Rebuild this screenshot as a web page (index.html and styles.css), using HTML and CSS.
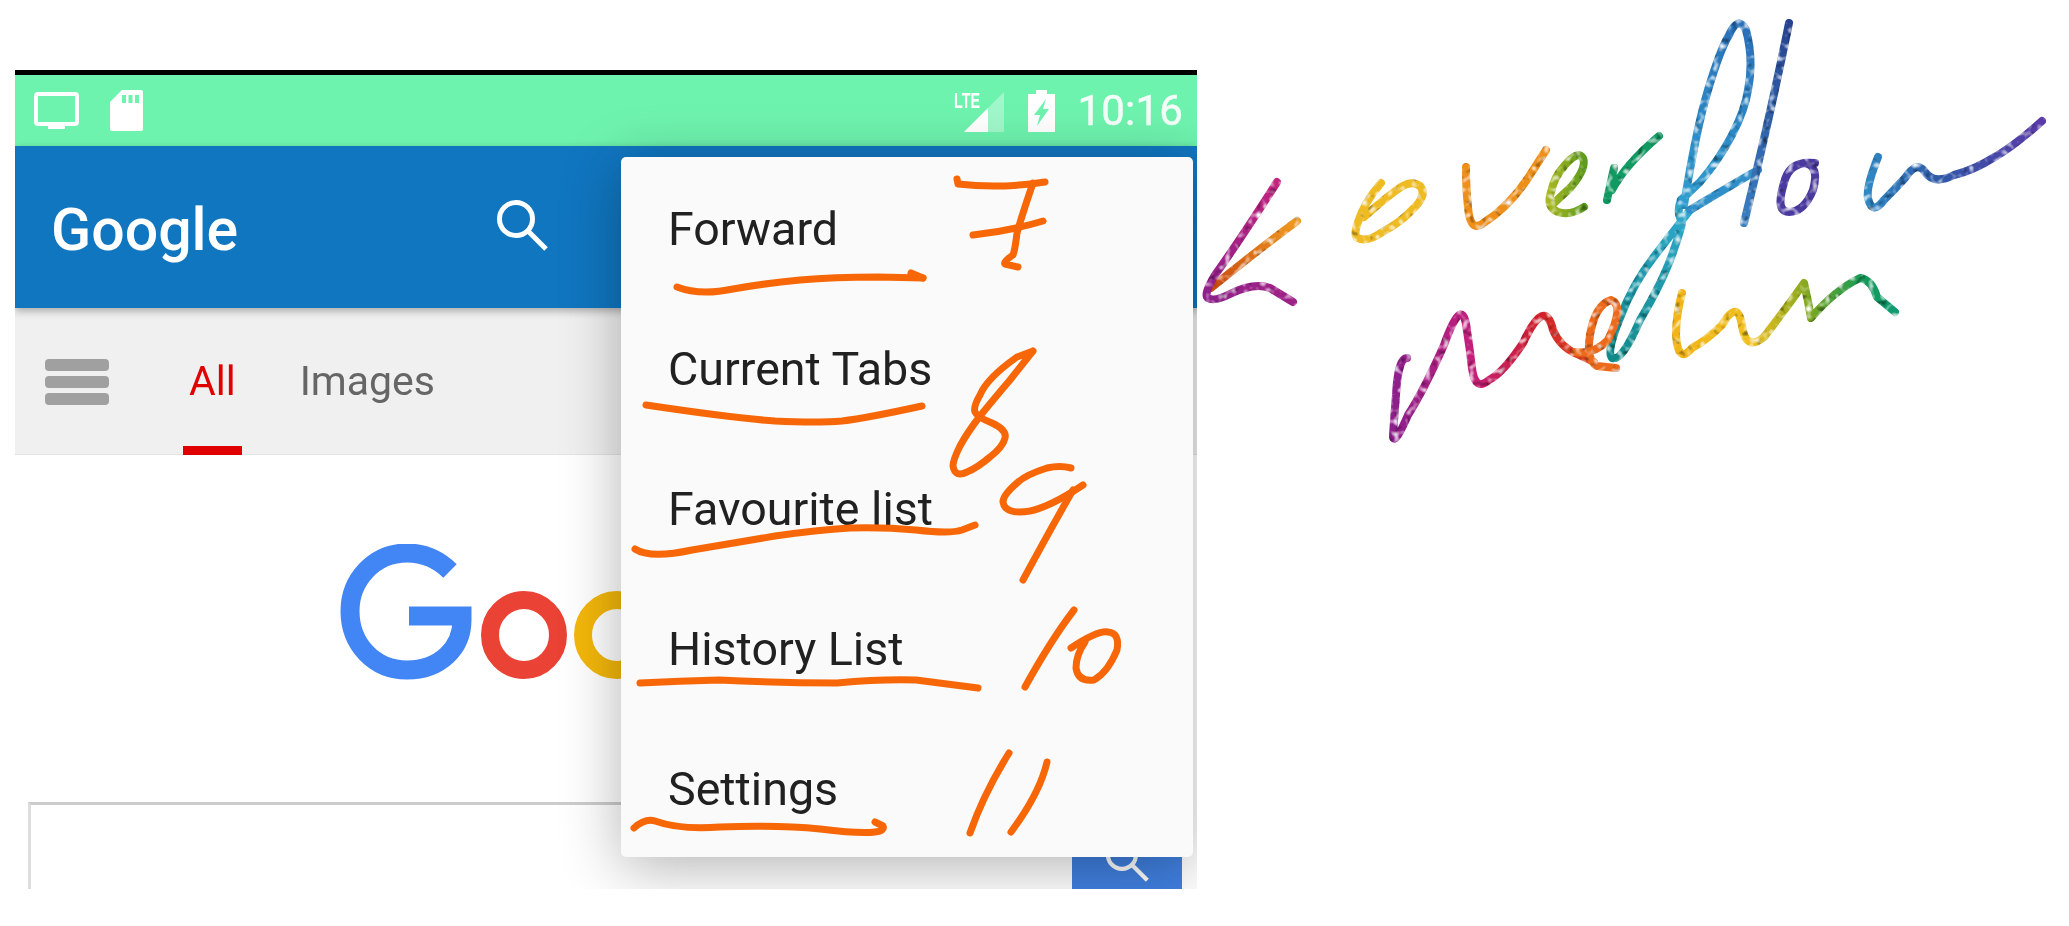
FILE: index.html
```html
<!DOCTYPE html>
<html lang="en">
<head>
<meta charset="utf-8">
<title>Overflow menu</title>
<link rel="stylesheet" href="styles.css">
</head>
<body>
<div class="stage">
  <div class="phone">
    <div class="status">
      <svg class="ic-monitor" width="45" height="37" viewBox="0 0 45 37"><rect x="2" y="2" width="41" height="30" rx="2" fill="none" stroke="#fff" stroke-width="4"/><rect x="14" y="33" width="17" height="4" fill="#fff"/></svg>
      <svg class="ic-sd" width="33" height="41" viewBox="0 0 33 41"><path d="M12 0H31a2 2 0 0 1 2 2V39a2 2 0 0 1-2 2H2a2 2 0 0 1-2-2V12Z" fill="#fff"/><path d="M12 5h4v8h-4zM18.500 5h4v8h-4zM25 5h4v8h-4z" fill="#6ef3ae"/></svg>
      <svg class="ic-signal" width="50" height="42" viewBox="0 0 50 42"><text class="lte" x="0" y="18" textLength="26" lengthAdjust="spacingAndGlyphs">LTE</text><path d="M10 42 50 2V42Z" fill="#fff" fill-opacity=".35"/><path d="M10 42 34 18V42Z" fill="#fff"/></svg>
      <svg class="ic-battery" width="27" height="42" viewBox="0 0 27 42"><path d="M8 0H19V4H27V42H0V4H8Z" fill="#fff"/><path d="M18 9 6 25H12L9 36 21 19H15Z" fill="#6ef3ae"/></svg>
      <span class="time">10:16</span>
    </div>
    <div class="appbar">
      <span class="brand">Google</span>
      <svg class="ic-search" width="52" height="52" viewBox="0 0 52 52"><circle cx="20" cy="20" r="16.500" fill="none" stroke="#fff" stroke-width="5"/><path d="M32 32 50 50" stroke="#fff" stroke-width="5" fill="none"/></svg>
    </div>
    <div class="tabs">
      <div class="burger"><i></i><i></i><i></i></div>
      <span class="tab tab-active">All</span>
      <span class="tab">Images</span>
    </div>
    <div class="home">
      <svg class="logo" width="400" height="140" viewBox="0 0 400 140">
        <path d="M110 27C99 16 84 9 67 9 34 9 10 36 10 67 10 100 34 126 67 126 100 126 122 104 122 76V72H69" fill="none" stroke="#4285f4" stroke-width="19"/>
        <ellipse cx="184" cy="91" rx="34" ry="35" fill="none" stroke="#ea4335" stroke-width="18"/>
        <ellipse cx="277" cy="91" rx="34" ry="35" fill="none" stroke="#f4b80a" stroke-width="18"/>
      </svg>
      <div class="searchbox">
        <div class="field"></div>
        <div class="go"><svg width="44" height="44" viewBox="0 0 52 52"><circle cx="20" cy="20" r="16.500" fill="none" stroke="#fff" stroke-width="5"/><path d="M32 32 50 50" stroke="#fff" stroke-width="5" fill="none"/></svg></div>
      </div>
    </div>
    <ul class="menu">
      <li>Forward</li>
      <li>Current Tabs</li>
      <li>Favourite list</li>
      <li>History List</li>
      <li>Settings</li>
    </ul>
  </div>

  <svg class="ink" width="2069" height="926" viewBox="0 0 2069 926">
    <defs>
      <linearGradient id="g-arrow" gradientUnits="userSpaceOnUse" x1="1280" y1="180" x2="1205" y2="300"><stop offset="0" stop-color="#c4247e"/><stop offset="1" stop-color="#8c1f8c"/></linearGradient>
      <linearGradient id="g-head" gradientUnits="userSpaceOnUse" x1="1297" y1="221" x2="1211" y2="288"><stop offset="0" stop-color="#f09a20"/><stop offset="1" stop-color="#c8480f"/></linearGradient>
      <linearGradient id="g-f" gradientUnits="userSpaceOnUse" x1="1740" y1="20" x2="1680" y2="210"><stop offset="0" stop-color="#2a6fb8"/><stop offset="1" stop-color="#2f9fd0"/></linearGradient>
      <linearGradient id="g-teal" gradientUnits="userSpaceOnUse" x1="1680" y1="210" x2="1615" y2="360"><stop offset="0" stop-color="#2fa8cc"/><stop offset="1" stop-color="#0f8a88"/></linearGradient>
      <linearGradient id="g-l" gradientUnits="userSpaceOnUse" x1="1789" y1="23" x2="1744" y2="223"><stop offset="0" stop-color="#27438f"/><stop offset="1" stop-color="#3a7fc0"/></linearGradient>
      <linearGradient id="g-w" gradientUnits="userSpaceOnUse" x1="1866" y1="0" x2="2042" y2="0"><stop offset="0" stop-color="#2f88c4"/><stop offset=".4" stop-color="#2f5aa8"/><stop offset="1" stop-color="#5a3aa8"/></linearGradient>
      <linearGradient id="g-m" gradientUnits="userSpaceOnUse" x1="1393" y1="0" x2="1620" y2="0"><stop offset="0" stop-color="#8c1f8c"/><stop offset=".35" stop-color="#c41f7a"/><stop offset=".65" stop-color="#d0202a"/><stop offset="1" stop-color="#ec6a1c"/></linearGradient>
      <linearGradient id="g-n" gradientUnits="userSpaceOnUse" x1="1676" y1="0" x2="1895" y2="0"><stop offset="0" stop-color="#f2b416"/><stop offset=".35" stop-color="#f0c020"/><stop offset=".6" stop-color="#82a820"/><stop offset=".85" stop-color="#149a58"/><stop offset="1" stop-color="#0f9a70"/></linearGradient>
      <linearGradient id="g-e2" gradientUnits="userSpaceOnUse" x1="1548" y1="0" x2="1587" y2="0"><stop offset="0" stop-color="#a8b820"/><stop offset="1" stop-color="#5a9a20"/></linearGradient>
      <filter id="glitter" filterUnits="userSpaceOnUse" x="1190" y="10" width="870" height="440" color-interpolation-filters="sRGB">
        <feTurbulence type="fractalNoise" baseFrequency="0.16" numOctaves="1" seed="4" result="noise"/>
        <feColorMatrix in="noise" type="matrix" values="0 0 0 0 1 0 0 0 0 1 0 0 0 0 1 3 0 0 0 -1.500" result="light"/>
        <feComposite in="light" in2="SourceAlpha" operator="in" result="sparkle"/>
        <feColorMatrix in="noise" type="matrix" values="0 0 0 0 0 0 0 0 0 0 0 0 0 0 0 0 -2 0 0 .850" result="dark"/>
        <feComposite in="dark" in2="SourceAlpha" operator="in" result="shade"/>
        <feMerge><feMergeNode in="SourceGraphic"/><feMergeNode in="shade"/><feMergeNode in="sparkle"/></feMerge>
      </filter>
    </defs>

    <g class="orange">
      <path d="M677 287Q700 296 733 289Q767 283 800 280Q833 277 878 277L923 278"/>
      <path d="M911 273L923 278"/>
      <path d="M957 179L958 184Q1000 189 1045 182"/>
      <path d="M1033 183Q1022 215 1017 233Q1015 250 1013 255Q1003 262 1005 264L1018 267"/>
      <path d="M973 235Q1010 231 1043 221"/>
      <path d="M646 405Q733 418 775 421Q817 423 842 421Q867 418 922 406"/>
      <path d="M1033 351L1017 357Q987 378 980 395Q973 407 975 412Q977 417 992 423Q1007 430 1005 438Q1003 447 990 457Q977 468 967 472Q955 478 953 466Q953 460 960 446Q967 433 980 416Q993 400 1010 380L1033 351"/>
      <path d="M635 549Q650 559 692 550Q733 543 775 536Q817 530 850 528Q883 527 916 530Q950 534 962 530L975 525"/>
      <path d="M1071 468Q1060 465 1047 468Q1025 475 1017 483Q1003 495 1003 502Q1005 515 1030 511Q1050 507 1083 485"/>
      <path d="M1073 490Q1050 530 1023 580"/>
      <path d="M640 683Q680 681 719 680Q780 683 837 683Q880 679 916 680L978 688"/>
      <path d="M1074 610Q1051 640 1025 687"/>
      <path d="M1071 648Q1098 630 1108 632Q1120 633 1117 650Q1108 672 1094 680Q1078 682 1076 668Q1076 655 1085 642"/>
      <path d="M634 828Q645 818 655 821Q680 830 720 827Q778 825 820 829Q860 834 875 832Q885 831 883 826L875 822"/>
      <path d="M1009 753Q984 793 970 833"/>
      <path d="M1047 762Q1040 793 1011 832"/>
    </g>

    <g class="glitter">
      <path stroke="url(#g-head)" d="M1297 221Q1254 253 1211 288"/>
      <path stroke="url(#g-arrow)" d="M1277 182Q1240 240 1215 275Q1203 295 1208 298Q1214 302 1230 294Q1254 282 1270 288L1293 302"/>
      <path stroke="#eebb22" d="M1381 183Q1364 203 1358 222Q1353 236 1358 238Q1367 243 1384 231Q1401 222 1412 210Q1428 195 1420 186Q1412 180 1401 187Q1385 198 1364 217"/>
      <path stroke="#ee8f1a" d="M1466 167Q1466 190 1468 207Q1470 232 1482 224Q1509 207 1528 178L1546 150"/>
      <path stroke="url(#g-e2)" d="M1584 207Q1570 216 1558 212Q1546 207 1551 192Q1554 177 1565 165Q1578 150 1583 158Q1587 168 1571 187L1554 203"/>
      <path stroke="#109a62" d="M1607 200L1614 168M1612 190Q1625 165 1659 136"/>
      <path stroke="url(#g-teal)" d="M1681 200Q1676 212 1682 222Q1682 227 1672 255Q1662 283 1640 320Q1622 362 1612 358Q1606 352 1620 318Q1633 283 1656 254L1690 210"/>
      <path stroke="url(#g-f)" d="M1684 205Q1696 130 1708 90Q1720 50 1729 35Q1738 15 1746 30Q1754 60 1748 90Q1745 110 1732 135Q1719 160 1700 182L1681 200"/>
      <path stroke="#2f8fc8" d="M1690 210Q1740 180 1758 170"/>
      <path stroke="url(#g-l)" d="M1789 23Q1770 117 1744 223"/>
      <path stroke="#4a3aa0" d="M1815 163Q1789 160 1784 183Q1775 212 1789 212Q1804 212 1813 190Q1820 165 1804 163"/>
      <path stroke="url(#g-w)" d="M1878 157Q1866 187 1868 198Q1872 216 1884 200Q1894 190 1905 178Q1917 160 1925 172Q1934 185 1954 175Q1974 170 1993 158Q2013 147 2042 121"/>
      <path stroke="url(#g-m)" d="M1407 358Q1398 358 1396 395Q1393 433 1393 437Q1395 445 1408 415Q1424 390 1444 345Q1463 292 1467 331Q1470 350 1472 368Q1475 392 1489 380Q1503 373 1523 343Q1545 296 1553 330Q1560 347 1577 354L1594 362"/>
      <path stroke="#ec6a1c" d="M1575 352Q1594 355 1608 340Q1625 305 1611 300Q1595 305 1590 335Q1586 360 1597 366L1616 368"/>
      <path stroke="url(#g-n)" d="M1682 293Q1676 315 1676 335Q1678 365 1692 348Q1707 340 1722 325Q1738 298 1742 326Q1746 352 1764 337Q1785 310 1804 283Q1808 300 1811 318Q1835 290 1860 278Q1872 280 1877 297L1895 312"/>
    </g>
  </svg>
</div>
</body>
</html>
```
FILE: styles.css
```css
* { box-sizing: border-box; }
html, body { margin: 0; height: 926px; overflow: hidden; background: #fff; }
body { font-family: Roboto, "Noto Sans", sans-serif; }

.stage { position: relative; width: 2069px; height: 926px; padding: 70px 0 0 15px; }

.phone {
  position: relative;
  width: 1182px;
  height: 819px;
  overflow: hidden;
  border-top: 5px solid #000;
  background: #fff;
  display: flex;
  flex-direction: column;
  filter: blur(.6px);
}

.status {
  flex: 0 0 71px;
  background: #6ef3ae;
  display: flex;
  align-items: center;
  padding: 0 14px 0 19px;
}
.ic-sd { margin-left: 31px; }
.ic-signal { margin-left: auto; overflow: visible; }
.lte { font-family: "Liberation Sans", sans-serif; font-size: 22px; font-weight: 700; fill: #fff; }
.ic-battery { margin-left: 24px; }
.time { margin-left: 22px; font-size: 42px; line-height: 1; color: #fff; opacity: .92; letter-spacing: .2px; -webkit-text-stroke: .5px #fff; }

.appbar {
  flex: 0 0 162px;
  background: #1076c0;
  display: flex;
  align-items: center;
  padding: 4px 0 0 36px;
  position: relative;
  z-index: 1;
  box-shadow: 0 3px 8px rgba(0, 0, 0, .3);
}
.brand { font-size: 59px; font-weight: 500; color: #fff; line-height: 1; }
.ic-search { margin-left: 258px; margin-top: -8px; }

.tabs {
  flex: 0 0 147px;
  background: #f0f0f0;
  border-bottom: 1px solid #e4e4e4;
  display: flex;
  align-items: center;
  padding-left: 30px;
}
.burger { display: flex; flex-direction: column; gap: 5px; width: 64px; margin-top: 2px; }
.burger i { display: block; height: 12px; border-radius: 4px; background: #a0a0a0; }
.tab {
  position: relative;
  font-size: 41px;
  line-height: 146px;
  padding: 0 6px;
  color: #666;
}
.tab-active { color: #e00000; margin-left: 74px; margin-right: 52px; }
.tab-active::after {
  content: "";
  position: absolute;
  left: 0;
  right: 0;
  bottom: -1px;
  height: 9px;
  background: #e00000;
}

.home { flex: 1; display: flex; flex-direction: column; padding: 89px 15px 0 13px; }
.logo { display: block; margin-left: 312px; flex: none; }
.searchbox { margin-top: 118px; flex: 1; display: flex; }
.field { flex: 1; border-top: 3px solid #cccccc; border-left: 3px solid #dddddd; }
.go { flex: 0 0 110px; background: #4080e0; display: flex; justify-content: center; padding-top: 36px; }

.menu {
  position: absolute;
  left: 606px;
  top: 82px;
  width: 572px;
  height: 700px;
  margin: 0;
  padding: 0;
  list-style: none;
  z-index: 2;
  background: #fafafa;
  border-radius: 5px;
  box-shadow: 0 10px 60px rgba(0, 0, 0, .3);
}
.menu li {
  height: 140px;
  display: flex;
  align-items: center;
  padding: 3px 0 0 47px;
  font-size: 46.6px;
  color: #212121;
}

.ink { position: absolute; left: 0; top: 0; z-index: 3; pointer-events: none; }
.orange path { fill: none; stroke: #f76707; stroke-width: 7; stroke-linecap: round; stroke-linejoin: round; }
.glitter { filter: url(#glitter); }
.glitter path { fill: none; stroke-width: 8; stroke-linecap: round; stroke-linejoin: round; }
```
